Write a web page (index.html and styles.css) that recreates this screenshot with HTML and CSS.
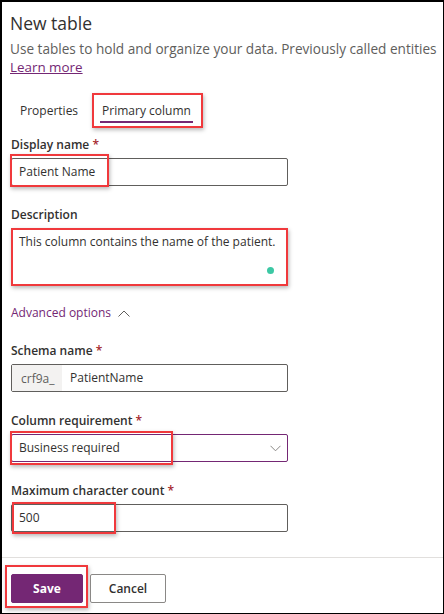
FILE: index.html
```
<!DOCTYPE html>
<html>
<head>
<meta charset="utf-8">
<link rel="stylesheet" href="styles.css">
</head>
<body>
<div class="panel">
  <header class="head">
    <h1 class="title">New table</h1>
    <p class="sub">Use tables to hold and organize your data. Previously called entities</p>
    <a class="link" href="#">Learn more</a>
  </header>
  <nav class="tabs">
    <span class="tab">Properties</span>
    <span class="tab active"><span class="tab-text">Primary column</span><span class="hl hl-tab"></span></span>
  </nav>
  <main class="form">
    <div class="field">
      <label class="label">Display name <span class="req">*</span></label>
      <div class="input"><span class="val">Patient Name</span><span class="hl hl-display"></span></div>
    </div>
    <div class="field">
      <label class="label">Description</label>
      <div class="textarea"><span class="val">This column contains the name of the patient.</span><span class="dot"></span><span class="hl hl-desc"></span></div>
    </div>
    <div class="adv">Advanced options
      <svg class="chev-up" width="12" height="7" viewBox="0 0 12 7"><path d="M0.5 6.5 L6 1 L11.5 6.5" fill="none" stroke="#605e5c" stroke-width="1"/></svg>
    </div>
    <div class="field">
      <label class="label">Schema name <span class="req">*</span></label>
      <div class="input schema"><span class="prefix">crf9a_</span><span class="val">PatientName</span></div>
    </div>
    <div class="field">
      <label class="label">Column requirement <span class="req">*</span></label>
      <div class="input select"><span class="val">Business required</span>
        <svg class="chev-down" width="11" height="7" viewBox="0 0 11 7"><path d="M0.5 0.8 L5.5 5.8 L10.5 0.8" fill="none" stroke="#8a8886" stroke-width="1"/></svg>
        <span class="hl hl-select"></span></div>
    </div>
    <div class="field">
      <label class="label">Maximum character count <span class="req">*</span></label>
      <div class="input"><span class="val">500</span><span class="hl hl-max"></span></div>
    </div>
  </main>
  <footer class="foot">
    <button class="btn primary">Save<span class="hl hl-save"></span></button>
    <button class="btn">Cancel</button>
  </footer>
</div>
</body>
</html>
```
FILE: styles.css
```
* { box-sizing: border-box; }
html, body { margin: 0; padding: 0; }
body {
  width: 444px;
  height: 614px;
  font-family: "Open Sans", "Noto Sans", sans-serif;
  color: #323130;
  font-size: 12px;
  background: #fff;
  overflow: hidden;
}
.panel {
  width: 444px;
  height: 614px;
  border: 1px solid #000;
  border-width: 2px 1px 1px 2px;
  overflow: hidden;
  display: flex;
  flex-direction: column;
}
.head { padding: 9px 0 0 8px; }
.title {
  margin: 0;
  font-size: 17.5px;
  font-weight: 400;
  line-height: 24px;
  color: #323130;
}
.sub {
  margin: 4px 0 0;
  font-size: 13.6px;
  color: #605e5c;
  white-space: nowrap;
  line-height: 19px;
}
.link {
  display: inline-block;
  font-size: 13.4px;
  color: #742774;
  text-decoration: underline;
  line-height: 19px;
  vertical-align: top;
}
.tabs {
  display: flex;
  align-items: flex-start;
  gap: 22px;
  padding: 24px 0 0 18px;
}
.tab {
  position: relative;
  line-height: 20px;
  color: #323130;
}
.tab.active .tab-text {
  display: inline-block;
  padding: 0 2px 0;
  border-bottom: 2px solid #742774;
}
.hl {
  position: absolute;
  border: 2px solid #f0393c;
  box-shadow: 1px 2px 4px rgba(0,0,0,0.28);
  pointer-events: none;
}
.hl-tab { left: -8px; top: -8px; width: 111px; height: 35px; }
.form {
  padding: 11px 0 0 9px;
  display: flex;
  flex-direction: column;
}
.field { margin-bottom: 18px; width: 277px; }
.label {
  display: block;
  font-weight: 600;
  line-height: 20px;
  padding-top: 1px;
  margin-bottom: 3px;
}
.req { color: #a4262c; }
.input {
  position: relative;
  height: 28px;
  border: 1px solid #605e5c;
  border-radius: 2px;
  display: flex;
  align-items: center;
  padding: 0 7px;
}
.val { line-height: 20px; }
.hl-display { left: -2px; top: -5px; width: 99px; height: 33px; }
.textarea {
  position: relative;
  height: 58px;
  border: 1px solid #605e5c;
  border-radius: 2px;
  padding: 3px 7px;
}
.dot {
  position: absolute;
  width: 7px; height: 7px;
  border-radius: 50%;
  background: #3cc8a4;
  right: 13px; bottom: 11px;
}
.hl-desc { left: -1px; top: -1px; right: -1px; bottom: -1px; }
.adv {
  color: #742774;
  line-height: 20px;
  padding-top: 1px;
  margin: -2px 0 17px;
  display: flex;
  align-items: center;
  gap: 7px;
}
.chev-up { margin-top: 1px; }
.schema { padding: 0; }
.prefix {
  background: #f3f2f1;
  color: #605e5c;
  align-self: stretch;
  display: flex;
  align-items: center;
  width: 50px;
  padding-left: 9px;
  margin-right: 8px;
}
.select { border-color: #742774; }
.chev-down { position: absolute; right: 6px; top: 10px; }
.hl-select { left: -2px; top: -4px; width: 163px; height: 34px; }
.hl-max { left: 0; top: -3px; width: 104px; height: 32px; }
.foot {
  margin-top: auto;
  border-top: 1px solid #e1dfdd;
  padding: 16px 0 10px 9px;
  display: flex;
  gap: 7px;
}
.btn {
  position: relative;
  height: 29px;
  font-family: inherit;
  font-size: 12px;
  font-weight: 600;
  border: 1px solid #8a8886;
  background: #fff;
  color: #323130;
  border-radius: 2px;
  width: 76px;
  padding: 0;
}
.btn.primary {
  background: #742774;
  border-color: #742774;
  color: #fff;
  font-weight: 700;
  width: 72px;
}
.hl-save { left: -7px; top: -10px; width: 83px; height: 43px; }
```
